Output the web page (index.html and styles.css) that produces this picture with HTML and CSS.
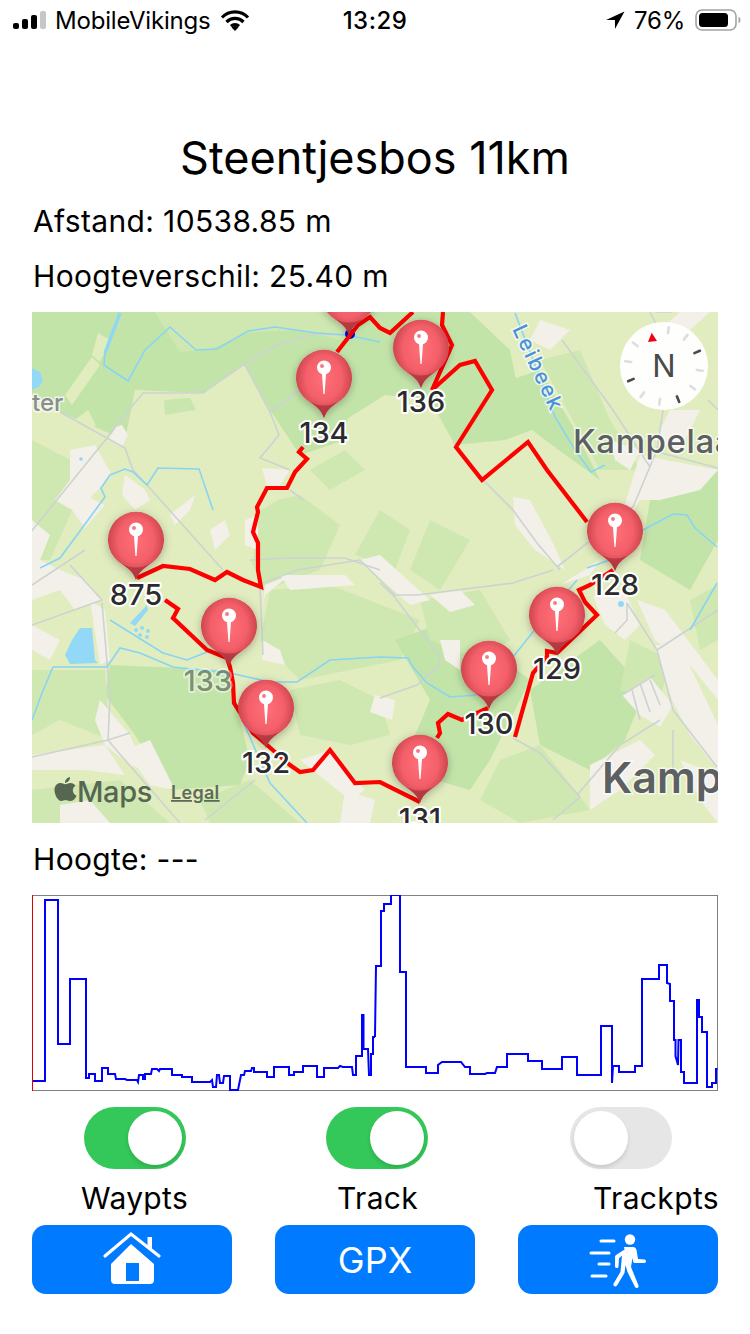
FILE: index.html
```html
<!DOCTYPE html>
<html lang="nl">
<head>
<meta charset="utf-8">
<title>Steentjesbos 11km</title>
<link rel="stylesheet" href="styles.css">
</head>
<body>
<div class="status">
  <div class="status-left">
    <svg class="signal" viewBox="0 0 34 18" width="34" height="18"><rect class="bar" x="0" y="12" width="6" height="6" rx="2"/><rect class="bar" x="9" y="8" width="6" height="10" rx="2"/><rect class="bar" x="18" y="4" width="6" height="14" rx="2"/><rect class="bar-off" x="27" y="0" width="6" height="18" rx="2"/></svg>
    <span class="carrier">MobileVikings</span>
    <svg class="wifi" viewBox="0 0 30 22" width="30" height="22"><path d="M2 8.5a18 18 0 0 1 26 0M6.5 13a12 12 0 0 1 17 0M11 17.2a6 6 0 0 1 8 0" fill="none" stroke="#000" stroke-width="3.2"/><path d="M15 22l-3.4-3.6a5 5 0 0 1 6.8 0z"/></svg>
  </div>
  <div class="clock">13:29</div>
  <div class="status-right">
    <svg class="loc" viewBox="0 0 18 18" width="19" height="19"><path d="M17.5.5 0 8.5h8.5V17z"/></svg>
    <span class="batt-pct">76%</span>
    <svg class="batt" viewBox="0 0 46 22" width="46" height="22"><rect x="1" y="1" width="40" height="20" rx="6" fill="none" stroke="#a2a2a2" stroke-width="1.6"/><rect x="4" y="4" width="29" height="14" rx="3.5"/><path d="M43.5 7.5a4 4 0 0 1 0 7z" fill="#a2a2a2"/></svg>
  </div>
</div>

<h1 class="title">Steentjesbos 11km</h1>
<p class="info first">Afstand: 10538.85 m</p>
<p class="info second">Hoogteverschil: 25.40 m</p>

<svg class="map" viewBox="32 312 686 511" width="686" height="511">
  <defs>
    <radialGradient id="head" cx="50%" cy="42%" r="58%">
      <stop offset="0" stop-color="#ff6e76"/>
      <stop offset=".55" stop-color="#f4606a"/>
      <stop offset="1" stop-color="#bd3a42"/>
    </radialGradient>
    <filter id="soft" x="-40%" y="-40%" width="180%" height="180%"><feDropShadow dx="0" dy="2" stdDeviation="4" flood-color="#000" flood-opacity=".28"/></filter>
    <g id="pin">
      <path fill="url(#head)" filter="url(#soft)" d="M0 40C-3 31-9 28-17 22A28 28 0 1 1 17 22C9 28 3 31 0 40Z"/>
      <path fill="#a8333a" opacity=".75" d="M0 40C-3 31-8 28-14 24Q0 31 14 24C8 28 3 31 0 40Z"/>
      <path fill="#fff" d="M-2 -4H2L.6 16H-.6ZM7 -10.500A7 7 0 1 1-7 -10.500A7 7 0 1 1 7 -10.500Z"/>
      <circle cx="-2" cy="-12" r="2" fill="#f27c84"/>
    </g>
  </defs>

  <rect class="land" x="32" y="312" width="686" height="511"/>

  <g class="green">
    <path d="M32 312H400L395 345 350 400 345 440 300 455 270 410 245 365 200 395 140 395 125 440 60 412 32 395Z"/>
    <path d="M155 312L180 352 210 349 250 332 300 330 340 340 350 312Z" class="fade"/>
    <path d="M350 312H470L510 350 520 400 545 425 505 440 455 445 430 400 385 395 345 420Z"/>
    <path d="M480 390L540 370 575 430 600 480 545 440Z"/>
    <path d="M540 360L580 350 610 420 640 470 600 470Z" class="fade"/>
    <path d="M32 440L90 470 50 560 32 560Z" class="fade"/>
    <path d="M255 505L300 495 340 525 320 570 265 590 250 560Z" class="fade"/>
    <path d="M310 470L345 450 365 470 330 490Z" class="fade"/>
    <path d="M380 510L410 530 395 570 355 555Z" class="fade"/>
    <path d="M430 520L470 540 440 590 410 570Z" class="fade"/>
    <path d="M650 500L718 470V540L690 590 640 560Z"/>
    <path d="M110 665L230 670 235 700 250 760 240 785 170 790 135 735 105 695Z"/>
    <path d="M32 670H105L110 740 60 720 32 735Z" class="fade"/>
    <path d="M270 590L330 585 420 620 400 660 300 680 260 640Z" class="fade"/>
    <path d="M290 690L340 680 380 700 390 735 350 745 300 735Z" class="fade"/>
    <path d="M395 640L450 620 530 680 490 760 470 790 400 770 430 700Z"/>
    <path d="M530 690L600 640 645 690 625 740 590 770 540 745Z"/>
    <path d="M32 790L120 780 170 823H32Z" class="fade"/>
    <path d="M420 600L480 590 510 640 480 660 430 640Z" class="fade"/>
    <path d="M630 640L670 660 660 700 620 690Z" class="fade"/>
    <path d="M690 600L718 585V640L700 650Z" class="fade"/>
    <path d="M500 760L540 745 590 810 520 823 480 800Z" class="fade"/>
    <path d="M200 800L250 780 300 823H210Z" class="fade"/>
  </g>
  <g class="land">
    <path d="M135 390L203 393 243 366 265 410 280 440 262 458 290 470 295 490 258 512 253 560 220 565 210 500 150 470 125 440Z"/>
    <path d="M92 355L98 333 110 340 100 362Z"/>
    <path d="M65 395L92 357 100 365 72 405Z"/>
    <path d="M68 425L88 410 96 425 78 440Z"/>
    <path d="M164 400L190 398 196 410 165 415Z" class="mid"/>
  </g>
  <g class="bld">
    <path d="M116 427L122 425 128 435 122 447 108 440Z"/>
    <path d="M70 450L95 445 112 475 90 498 105 505 85 528 72 510 55 500 70 480Z"/>
    <path d="M125 475L145 490 150 500 135 510 122 495Z"/>
    <path d="M170 515L195 495 190 510 175 525Z"/>
    <path d="M32 520L50 535 40 560 60 570 85 580 102 600 75 610 60 590 32 600Z"/>
    <path d="M210 530L225 520 230 535 215 550Z"/>
    <path d="M245 520L258 515 258 550 245 545Z"/>
    <path d="M262 468L290 470 280 485 268 490Z"/>
    <path d="M32 625L60 640 50 660 32 650Z"/>
    <path d="M90 600L105 610 110 660 100 665Z"/>
    <path d="M265 585L290 575 265 595 262 610Z"/>
    <path d="M262 640L280 650 285 665 262 660Z"/>
    <path d="M100 700L130 735 145 770 130 765 105 745 95 720Z"/>
    <path d="M125 750L150 740 175 790 150 785Z"/>
    <path d="M32 755L105 745 125 775 85 770 32 770Z"/>
    <path d="M60 805L90 800 110 823H60Z"/>
    <path d="M280 575H345L355 585 290 590Z"/>
    <path d="M360 560L380 555 430 600 410 605Z"/>
    <path d="M300 760L330 750 365 790 350 800Z"/>
    <path d="M513 497L530 500 553 543 565 570 535 550 515 525Z"/>
    <path d="M430 595L460 590 475 605 450 612Z"/>
    <path d="M540 320L570 330 550 350 530 340Z"/>
    <path d="M640 455L718 470 700 490 660 500 640 500 620 530 590 575 560 585 600 560 620 520Z"/>
    <path d="M610 440L640 450 630 470 615 460Z"/>
    <path d="M660 330L680 312H710L690 330Z"/>
    <path d="M670 410L700 410 680 450 655 440Z"/>
    <path d="M593 596L625 592 640 625 625 640 605 625Z"/>
    <path d="M637 600L665 610 718 680V700L690 665 655 640Z"/>
    <path d="M655 645L680 645 718 725V770L690 735 672 700Z"/>
    <path d="M622 695L650 677 673 705 660 727 640 715Z"/>
    <path d="M680 760L718 775V823L700 800Z"/>
    <path d="M590 765L640 740 655 755 620 790 590 810Z"/>
    <path d="M375 695L395 700 392 720 370 712Z"/>
    <path d="M345 790L375 800 370 823H340Z"/>
    <path d="M440 640L460 640 460 670 445 660Z"/>
  </g>

  <g class="road">
    <path d="M143 393L203 393 243 365 273 347 313 334 347 335M143 393L118 423 107 438 30 533"/>
    <path d="M60 412L125 448 133 470 147 485 223 570M245 365L270 412 279 435 260 458 290 470M270 412L300 390M290 490L303 500"/>
    <path d="M562 340L613 410 650 467M663 410L657 450 633 507 557 567M650 450L718 468M453 442L483 480 513 510 537 543 560 570"/>
    <path d="M380 583L393 595 417 595 513 583 553 570M393 595L440 657 438 667 417 685 380 698M513 738L540 753 580 797 553 820"/>
    <path d="M627 603L627 620 615 633M627 603L657 650 673 710 717 767M673 730L673 780M657 650L718 610M622 695L655 675M632 690L640 720M640 683L650 712M650 680L660 705"/>
    <path d="M102 603L110 697 108 740 130 733M108 740L118 752 180 823M32 757L108 740M32 625L102 600M102 600L70 565M260 587L263 655M263 583L297 570 360 560 395 595M32 585L85 550"/>
    <path d="M250 560L290 558 345 558 380 570M205 820L255 780"/>
    <path d="M577 795L620 745 660 720"/>
    <path d="M650 312L666 345 663 410M708 400L718 410M655 312L672 312"/>
  </g>

  <path class="wide-water" d="M120 313L105 353"/>
  <path class="lake" d="M32 368L40 372 43 380 40 386 32 390Z"/>
  <path class="lake" d="M65 655L72 640 80 628 92 628 95 660 98 663 70 664Z"/>
  <path class="lake" d="M130 623L147 605 148 610 135 626Z"/>
  <circle class="lake" cx="136" cy="630" r="2"/><circle class="lake" cx="142" cy="628" r="2"/><circle class="lake" cx="148" cy="631" r="2"/><circle class="lake" cx="140" cy="635" r="2"/><circle class="lake" cx="147" cy="637" r="2"/><circle class="lake" cx="621" cy="604" r="3"/><circle class="lake" cx="81" cy="459" r="1.800"/>
  <g class="water">
    <path d="M105 353L104 365 128 381 145 350 170 327 196 350 217 349 248 331 275 327 317 333 347 335 380 342"/>
    <path d="M40 568L60 558 105 497 101 488 110 475 125 469 133 472 147 485 158 468 199 469 213 510"/>
    <path d="M515 313L555 417 575 450 591 472 605 465"/>
    <path d="M643 530L673 514 687 515 695 528 717 547M587 568L610 560M513 657L537 627 577 580M717 583L690 630"/>
    <path d="M110 620L163 653 187 660 207 652M32 720L42 693 53 667 107 667 120 648 140 653 173 667 230 673 270 682 297 682 330 660 380 657 408 658 413 667 427 683 450 697 477 695"/>
    <path d="M238 710L270 783 307 823"/>
  </g>

  <circle class="bluedot" cx="350" cy="334" r="5"/>

  <g class="route">
    <path d="M443 312L442 325 452 345 432 390M413 312L390 333 380 328 370 317 358 325 337 352M303 447L299 452 307 459 295 472 287 488 267 488 257 507 258 512 253 532 258 543 258 570 261 587 243 580 227 572 215 580 190 569 163 566 137 578"/>
    <path d="M165 600L178 609 173 618 207 650 227 658 230 667 233 683 234 703 253 733 267 745 290 765 300 772 313 770 330 750 355 783 380 782 420 802"/>
    <path d="M437 738L440 733 438 723 448 714 462 720 488 708M515 737L533 673 547 657 547 651 557 653 597 615 585 602 579 590 590 585 613 570"/>
    <path d="M587 522L547 470 528 442 482 480 456 447 492 390 475 361 460 365 432 390"/>
  </g>

  <use href="#pin" x="349" y="295"/>
  <use href="#pin" x="324" y="378"/>
  <use href="#pin" x="421" y="348"/>
  <use href="#pin" x="136" y="540"/>
  <use href="#pin" x="229" y="626"/>
  <use href="#pin" x="266" y="708"/>
  <use href="#pin" x="420" y="763"/>
  <use href="#pin" x="489" y="669"/>
  <use href="#pin" x="557" y="615"/>
  <use href="#pin" x="615" y="531"/>

  <g class="pin-label">
    <text x="324" y="443">134</text>
    <text x="421" y="412">136</text>
    <text x="136" y="605">875</text>
    <text x="208" y="691" class="faded">133</text>
    <text x="266" y="773">132</text>
    <text x="420" y="829">131</text>
    <text x="489" y="734">130</text>
    <text x="557" y="679">129</text>
    <text x="615" y="595">128</text>
  </g>

  <text class="place small" x="32" y="411">ter</text>
  <text class="place blue" transform="translate(512 329) rotate(65)">Leibeek</text>
  <text class="place mid" x="573" y="453">Kampelaa</text>
  <text class="place big" x="602" y="793">Kamp</text>

  <path class="apple" d="M70 801c-2 0-3-1-4.500-1s-2.500 1-4.500 1c-3 0-6.500-6-6.500-11 0-4.500 3-7 6-7 1.800 0 3.200 1.200 5 1.200s3-1.200 5-1.200c1.500 0 3.500.7 5 2.800-4 2.500-3.300 8 1 10-1 2.500-3 5.200-6 5.200ZM65 783c-.2-3 2.300-5.500 5-6 .3 3-2.300 5.700-5 6Z"/>
  <text class="maps-word" x="77" y="802">Maps</text>
  <text class="legal" x="171" y="799">Legal</text>

  <circle class="compass" cx="664" cy="366" r="44"/>
  <g class="tick-light">
    <path d="M664 333V327" transform="rotate(7 664 366)"/>
    <path d="M664 333V327" transform="rotate(37 664 366)"/>
    <path d="M664 333V327" transform="rotate(97 664 366)"/>
    <path d="M664 333V327" transform="rotate(127 664 366)"/>
    <path d="M664 333V327" transform="rotate(187 664 366)"/>
    <path d="M664 333V327" transform="rotate(217 664 366)"/>
    <path d="M664 333V327" transform="rotate(277 664 366)"/>
    <path d="M664 333V327" transform="rotate(307 664 366)"/>
  </g>
  <g class="tick-dark">
    <path d="M664 333V327" transform="rotate(67 664 366)"/>
    <path d="M664 333V327" transform="rotate(157 664 366)"/>
    <path d="M664 333V327" transform="rotate(247 664 366)"/>
  </g>
  <path class="needle" d="M651.700 332.700L657 341 648 342Z"/>
  <text class="north" x="664" y="377">N</text>
</svg>

<p class="info alt">Hoogte: ---</p>

<svg class="chart" viewBox="32 895 686 196" width="686" height="196">
  <rect class="chart-frame" x="32.500" y="895.500" width="685" height="195"/>
  <path class="chart-left" d="M32.500 895V1091"/>
  <path class="chart-line" d="M33 1081H45V900H58V1044H70V979H86V1078H89V1074H95V1081H102V1068H108V1074H115L116 1079H125L127 1080H137L138 1082 139 1075H143V1079H145V1074H151L152 1069H157L159 1071 160 1069H172V1075H182V1077H192V1082H210L212 1080 213 1087H216L217 1075H219L220 1083H223L224 1076H230V1090H238L241 1075H244L245 1071H251L252 1068H254V1072H267V1077H274V1067H289V1075H294V1072H303V1066H317V1077H324V1068H338L340 1066 343 1067H352L353 1075H356V1056H362V1015H363.500V1049H368L369 1075H371V1054H373V1037H375V1037M375 1037V1036L376 966H381V911H384V904H391V895H400V972H406V1067H426V1073H438V1065L442 1062H461L465 1067H470V1074H485L487 1073H495L497 1067H507V1054H528V1061H542V1069H562V1057H577V1075H601V1026H612V1083L613 1066H619V1072H635V1066H642V979H659V965H667V983L670 984V1001H674V1040H675.500V1056L678 1065 678.500 1040H681V1072H684V1083H697V1000H699V1017H702V1032H707V1087H712V1083H716V1069H717.500"/>
</svg>

<div class="toggles">
  <div class="toggle on"><span class="knob"></span></div>
  <div class="toggle on"><span class="knob"></span></div>
  <div class="toggle off"><span class="knob"></span></div>
</div>
<div class="labels">
  <span>Waypts</span>
  <span>Track</span>
  <span>Trackpts</span>
</div>
<div class="buttons">
  <button class="btn" type="button">
    <svg viewBox="100 1230 64 58" width="64" height="58"><path fill="#fff" d="M131 1243L154 1263V1279a4 4 0 0 1-4 4H115a4 4 0 0 1-4-4V1263ZM126 1262V1280H139V1262Z" fill-rule="evenodd"/><path fill="none" stroke="#fff" stroke-width="3.200" stroke-linecap="round" d="M105 1255L131 1233 159 1255"/><path fill="#fff" d="M147.500 1236H152V1249L147.500 1245Z"/></svg>
  </button>
  <button class="btn gpx" type="button">GPX</button>
  <button class="btn" type="button">
    <svg viewBox="588 1230 62 58" width="62" height="58"><circle cx="631" cy="1238.500" r="5.200" fill="#fff"/><path fill="none" stroke="#fff" stroke-width="3" stroke-linecap="round" d="M602 1240H615M592 1252H610M600 1263H610M593 1275H607"/><path fill="#fff" d="M625 1246h9c2 0 3 1 3.500 3l1.500 9 6.500.5c2 .2 2 3.500-.2 3.500H636c-1 0-1.700-.5-1.800-1.500l-.7-3.500-1.500 9 7.500 18.500c.8 2.500-2.500 3.500-3.500 1.500l-7.500-15-2-7-1 8-7.500 12.500c-1.300 2-4.500.5-3.500-1.800l7-12 1.500-16-3 2.500-.5 8c0 2.500-3.500 2.500-3.500 0v-9c0-1 .3-1.700 1-2.300l7-4.500c.5-.3 1-.4 1.500-.4Z"/></svg>
  </button>
</div>
</body>
</html>
```
FILE: styles.css
```css
* { box-sizing: border-box; }
html, body { margin: 0; padding: 0; background: #fff; }
body { width: 750px; height: 1334px; overflow: hidden; font-family: Inter, "Liberation Sans", sans-serif; color: #000; }

.status { display: grid; grid-template-columns: 1fr auto 1fr; align-items: center; height: 40px; font-size: 24px; letter-spacing: -.2px; }
.status-left { display: flex; align-items: center; padding-left: 13px; }
.signal { margin-right: 8px; }
.bar { fill: #000; }
.bar-off { fill: #c7c7c7; }
.carrier { margin-right: 9px; }
.clock { font-weight: 500; text-align: center; letter-spacing: .5px; }
.status-right { display: flex; align-items: center; justify-content: flex-end; padding-right: 9px; }
.loc { margin-right: 9px; }
.batt-pct { margin-right: 10px; }

.title { margin: 90px 0 0; height: 56px; line-height: 56px; font-size: 45px; font-weight: 400; text-align: center; }
.info { margin: 0; height: 42px; line-height: 42px; font-size: 30px; letter-spacing: .35px; padding-left: 33px; }
.info.first { margin-top: 14px; }
.info.second { margin-top: 13px; }
.info.alt { margin-top: 15px; }

.map { display: block; margin: 15px 0 0 32px; }
.land { fill: #e1edbf; }
.green { fill: #c3e4a9; }
.fade { fill: #cfe8b1; }
.land .mid { fill: #c9e6ae; }
.bld { fill: #f3f0e9; }
.road { fill: none; stroke: #cdd2d2; stroke-width: 1.6; }
.water { fill: none; stroke: #88d4f4; stroke-width: 1.6; }
.wide-water { fill: none; stroke: #8fd7f6; stroke-width: 3.5; }
.lake { fill: #93d8f6; }
.bluedot { fill: #0000e0; }
.route { fill: none; stroke: #f00; stroke-width: 4.2; stroke-linejoin: miter; }
.pin-label text { font-size: 29px; font-weight: 500; text-anchor: middle; fill: #2b2b2e; stroke: #fff; stroke-width: 4px; paint-order: stroke; stroke-linejoin: round; }
.pin-label .faded { opacity: .45; }
.place { font-weight: 500; fill: #5c6063; stroke: #fff; stroke-opacity: .7; stroke-width: 3px; paint-order: stroke; }
.place.small { font-size: 24px; fill: #8a8d8d; }
.place.blue { font-size: 21px; fill: #4a92d8; letter-spacing: 2px; }
.place.mid { font-size: 33px; letter-spacing: .6px; }
.place.big { font-size: 43px; font-weight: 600; }
.apple { fill: #566650; }
.maps-word { font-size: 29px; font-weight: 500; fill: #566650; letter-spacing: -.4px; }
.legal { font-size: 18px; font-weight: 600; fill: #5d6b58; text-decoration: underline; letter-spacing: .3px; }
.compass { fill: #fff; fill-opacity: .96; }
.tick-light path, .tick-dark path { fill: none; stroke-width: 2.6; stroke-linecap: round; }
.tick-light path { stroke: #dedede; }
.tick-dark path { stroke: #4a4a4a; }
.needle { fill: #f40012; }
.north { font-size: 31px; fill: #4a4a4a; text-anchor: middle; }

.chart { display: block; margin: 15px 0 0 32px; }
.chart-frame { fill: #fff; stroke: #808080; stroke-width: 1; }
.chart-left { fill: none; stroke: #e00000; stroke-width: 1; }
.chart-line { fill: none; stroke: #0000ff; stroke-width: 2; }

.toggles { display: grid; grid-template-columns: 242px 244px 102px; padding-left: 84px; margin-top: 16px; }
.toggle { width: 102px; height: 62px; border-radius: 31px; padding: 4px; display: flex; }
.toggle.on { background: #34c759; justify-content: flex-end; }
.toggle.off { background: #e6e6e6; justify-content: flex-start; }
.knob { width: 54px; height: 54px; border-radius: 50%; background: #fff; box-shadow: 0 3px 4px rgba(0,0,0,.12); }

.labels { display: grid; grid-template-columns: 256px 256px auto; padding-left: 81px; margin-top: 8px; height: 42px; line-height: 42px; font-size: 30px; letter-spacing: .35px; }

.buttons { display: grid; grid-template-columns: repeat(3, 200px); column-gap: 43px; padding-left: 32px; margin-top: 6px; }
.btn { height: 69px; border: 0; border-radius: 14px; background: #007aff; color: #fff; padding: 0; display: flex; align-items: center; justify-content: center; font-family: inherit; }
.gpx { font-size: 36px; }
```
